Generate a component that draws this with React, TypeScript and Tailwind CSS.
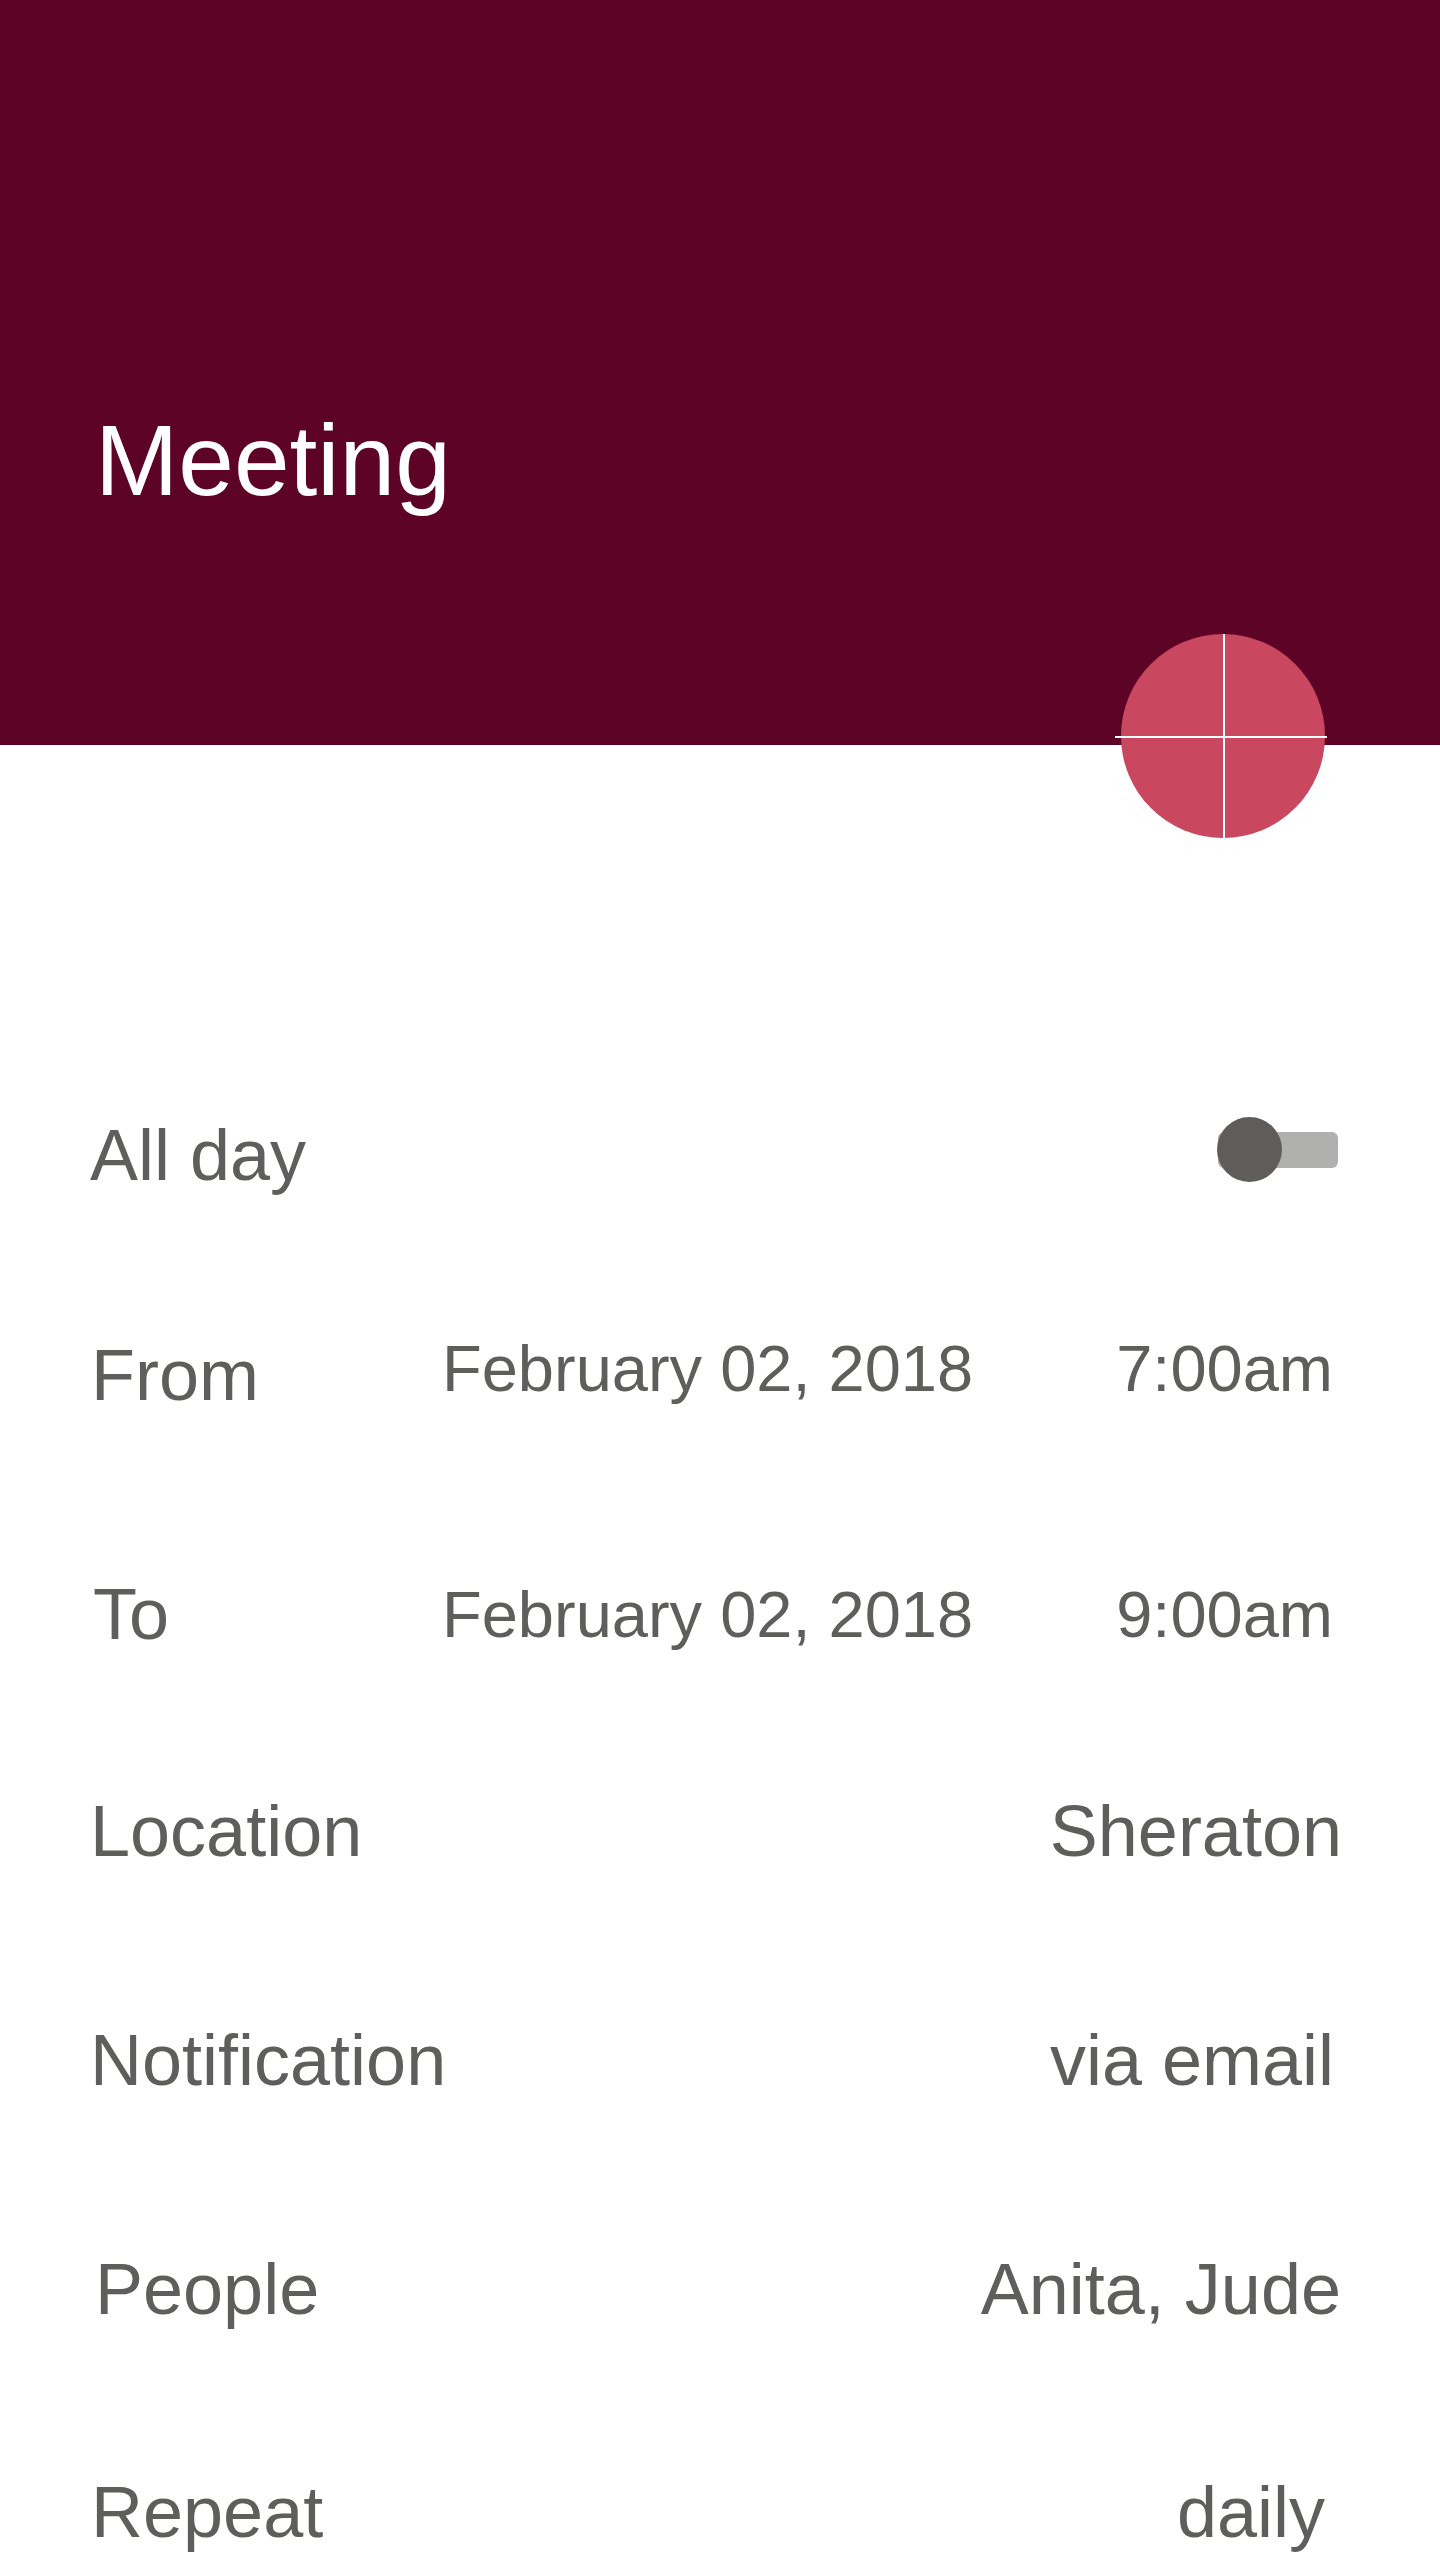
import React from "react";

const font = { fontFamily: '"Liberation Sans", Arial, sans-serif' };

function Label({ children, cls }: { children: React.ReactNode; cls?: string }) {
  return <span className={`text-[72px] leading-none text-[#5e5e5c] ${cls ?? ""}`}>{children}</span>;
}

function Value({ children, cls }: { children: React.ReactNode; cls?: string }) {
  return <span className={`text-[65px] leading-none text-[#5e5e5c] ${cls ?? ""}`}>{children}</span>;
}

export default function App() {
  return (
    <div className="relative w-[1440px] h-[2560px] overflow-hidden bg-white" style={font}>
      <header className="h-[745px] bg-[#5c0326] pt-[410px] pl-[95px]">
        <h1 className="text-[100px] leading-none text-white font-normal">Meeting</h1>
      </header>

      {/* FAB */}
      <div className="absolute left-[1115px] top-[634px] w-[212px] h-[204px]">
        <div className="absolute left-[6px] top-0 w-[204px] h-[204px] rounded-full bg-[#c9475f]" />
        <svg className="absolute left-0 top-0" width="212" height="204" viewBox="0 0 212 204">
          <line x1="0" y1="103" x2="212" y2="103" stroke="#ffffff" strokeWidth="2" />
          <line x1="109" y1="0" x2="109" y2="204" stroke="#ffffff" strokeWidth="2" />
        </svg>
      </div>

      <main className="flex flex-col">
        {/* All day */}
        <div className="mt-[374px] h-[72px] flex items-start justify-between pl-[90px] pr-[102px]">
          <Label>All day</Label>
          <div className="relative mt-[-2px] w-[121px] h-[66px] flex items-center">
            <div className="ml-[1px] w-[120px] h-[36px] rounded-[6px] bg-[#b0b0af]" />
            <div className="absolute left-0 top-0 w-[65px] h-[65px] rounded-full bg-[#5e5d5b]" />
          </div>
        </div>

        {/* From */}
        <div className="mt-[145px] h-[72px] flex items-start pl-[91px] pr-[107px]">
          <Label cls="mt-[3px] w-[351px]">From</Label>
          <Value>February 02, 2018</Value>
          <span className="flex-1" />
          <Value>7:00am</Value>
        </div>

        {/* To */}
        <div className="mt-[170px] h-[72px] flex items-start pl-[93px] pr-[107px]">
          <Label cls="w-[349px]">To</Label>
          <Value cls="mt-[4px]">February 02, 2018</Value>
          <span className="flex-1" />
          <Value cls="mt-[4px]">9:00am</Value>
        </div>

        {/* Location */}
        <div className="mt-[145px] h-[72px] flex items-start justify-between pl-[90px] pr-[98px]">
          <Label>Location</Label>
          <Label>Sheraton</Label>
        </div>

        {/* Notification */}
        <div className="mt-[157px] h-[72px] flex items-start justify-between pl-[90px] pr-[106px]">
          <Label>Notification</Label>
          <Label>via email</Label>
        </div>

        {/* People */}
        <div className="mt-[157px] h-[72px] flex items-start justify-between pl-[95px] pr-[99px]">
          <Label>People</Label>
          <Label>Anita, Jude</Label>
        </div>

        {/* Repeat */}
        <div className="mt-[151px] h-[72px] flex items-start justify-between pl-[91px] pr-[115px]">
          <Label>Repeat</Label>
          <Label>daily</Label>
        </div>
      </main>
    </div>
  );
}
